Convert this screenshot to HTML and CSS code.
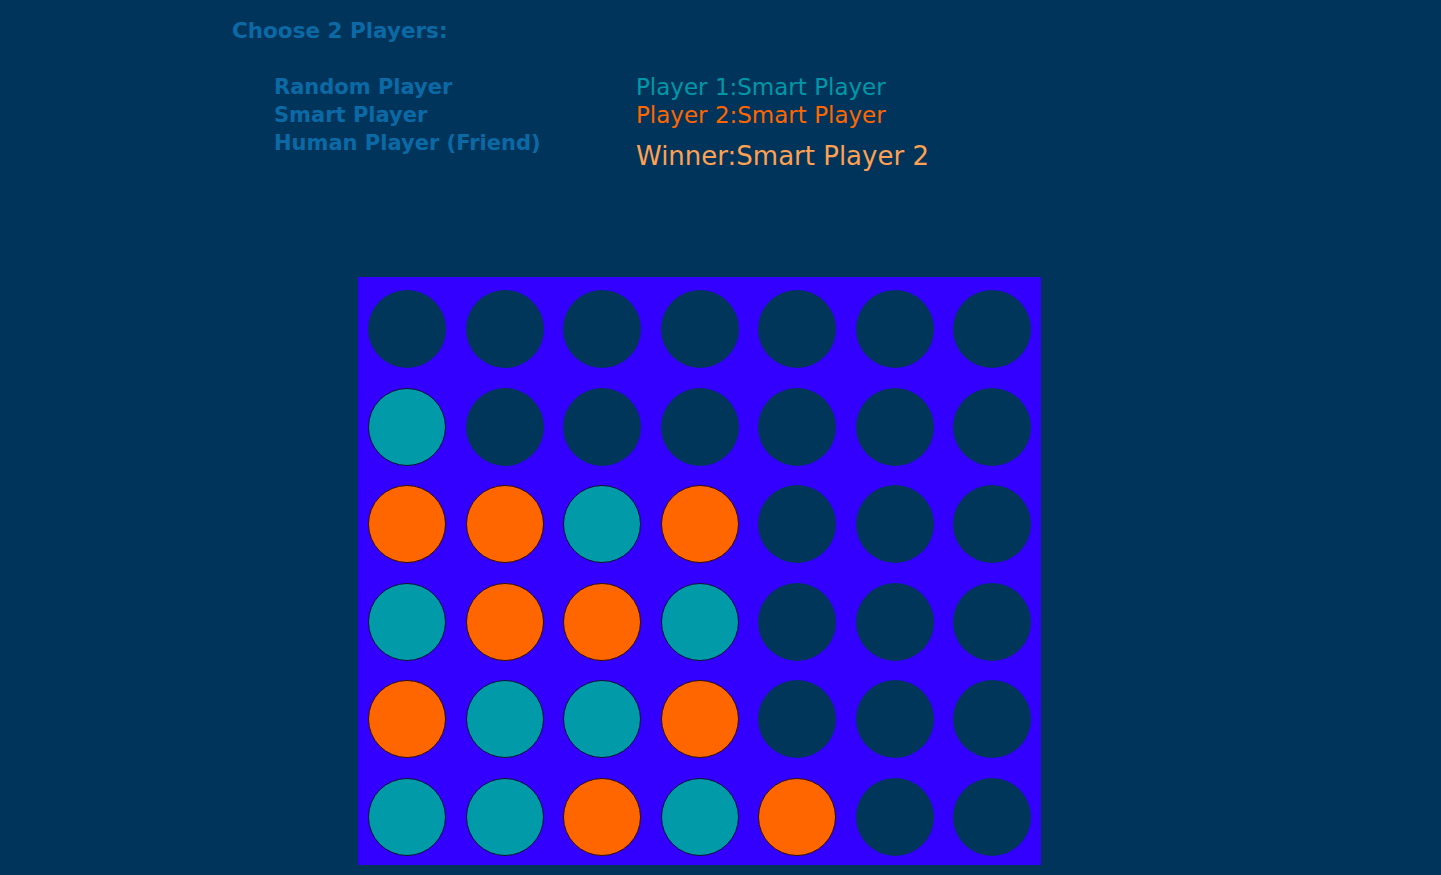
FILE: index.html
```html
<!DOCTYPE html>
<html>
<head>
<meta charset="utf-8">
<link rel="stylesheet" href="styles.css">
<title>Connect Four</title>
</head>
<body>
<div class="page">
  <div class="title">Choose 2 Players:</div>
  <div class="top">
    <ul class="choices">
      <li>Random Player</li>
      <li>Smart Player</li>
      <li>Human Player (Friend)</li>
    </ul>
    <div class="status">
      <div class="p1">Player 1:Smart Player</div>
      <div class="p2">Player 2:Smart Player</div>
      <div class="winner">Winner:Smart Player 2</div>
    </div>
  </div>
  <div class="board">
    <span class="c"></span><span class="c"></span><span class="c"></span><span class="c"></span><span class="c"></span><span class="c"></span><span class="c"></span>
    <span class="c t"></span><span class="c"></span><span class="c"></span><span class="c"></span><span class="c"></span><span class="c"></span><span class="c"></span>
    <span class="c o"></span><span class="c o"></span><span class="c t"></span><span class="c o"></span><span class="c"></span><span class="c"></span><span class="c"></span>
    <span class="c t"></span><span class="c o"></span><span class="c o"></span><span class="c t"></span><span class="c"></span><span class="c"></span><span class="c"></span>
    <span class="c o"></span><span class="c t"></span><span class="c t"></span><span class="c o"></span><span class="c"></span><span class="c"></span><span class="c"></span>
    <span class="c t"></span><span class="c t"></span><span class="c o"></span><span class="c t"></span><span class="c o"></span><span class="c"></span><span class="c"></span>
  </div>
</div>
</body>
</html>
```
FILE: styles.css
```css
html, body {
  margin: 0;
  padding: 0;
  background: #00345a;
  height: 100%;
  overflow: hidden;
}
.page {
  font-family: "DejaVu Sans", Verdana, sans-serif;
  padding: 16px 0 0 232px;
}
.title {
  color: #0b6aa6;
  font-size: 21.5px;
  font-weight: bold;
  line-height: 30px;
}
.top {
  display: flex;
  margin-top: 27px;
}
.choices {
  list-style: none;
  margin: 0;
  padding: 0 0 0 42px;
  width: 362px;
  color: #0b6aa6;
  font-size: 21px;
  font-weight: bold;
  line-height: 28px;
}
.status {
  font-size: 23px;
  line-height: 28px;
}
.p1 { color: #0098a8; }
.p2 { color: #ff6600; }
.winner {
  color: #ffa052;
  font-size: 26px;
  line-height: 30px;
  margin-top: 12px;
}
.board {
  margin: 106px 0 0 126px;
  width: 663px;
  height: 565.5px;
  padding: 13px 10px 9.5px 10px;
  background: #3300ff;
  display: grid;
  grid-template-columns: repeat(7, 78px);
  grid-auto-rows: 78px;
  column-gap: 19.5px;
  row-gap: 19.5px;
}
.c {
  width: 78px;
  height: 78px;
  border-radius: 50%;
  background: #00365a;
  box-sizing: border-box;
}
.c.t {
  background: #009aa8;
  border: 1.5px solid #111133;
}
.c.o {
  background: #ff6600;
  border: 1.5px solid #331100;
}
```
